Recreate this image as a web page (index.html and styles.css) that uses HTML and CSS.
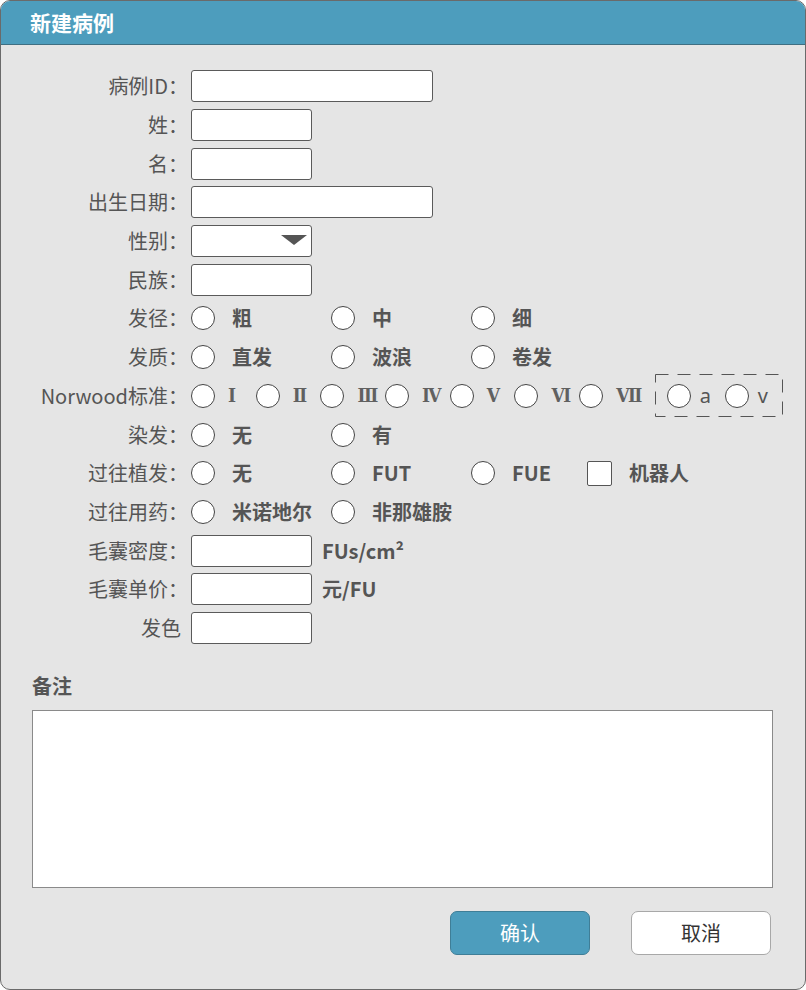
FILE: index.html
```html
<!DOCTYPE html>
<html lang="zh-CN">
<head>
<meta charset="utf-8">
<title>新建病例</title>
<link rel="stylesheet" href="styles.css">
</head>
<body>
<div class="dialog">
  <div class="header"><span class="title">新建病例</span></div>
  <div class="form">
    <div class="row"><span class="label">病例ID：</span><span class="input long"></span></div>
    <div class="row"><span class="label">姓：</span><span class="input"></span></div>
    <div class="row"><span class="label">名：</span><span class="input"></span></div>
    <div class="row"><span class="label">出生日期：</span><span class="input long"></span></div>
    <div class="row"><span class="label">性别：</span><span class="input select"><span class="arrow"></span></span></div>
    <div class="row"><span class="label">民族：</span><span class="input"></span></div>
    <div class="row"><span class="label">发径：</span>
      <span class="opt"><span class="radio"></span><span class="otext">粗</span></span>
      <span class="opt"><span class="radio"></span><span class="otext">中</span></span>
      <span class="opt"><span class="radio"></span><span class="otext">细</span></span>
    </div>
    <div class="row"><span class="label">发质：</span>
      <span class="opt"><span class="radio"></span><span class="otext">直发</span></span>
      <span class="opt"><span class="radio"></span><span class="otext">波浪</span></span>
      <span class="opt"><span class="radio"></span><span class="otext">卷发</span></span>
    </div>
    <div class="row"><span class="label">Norwood标准：</span>
      <span class="nw"><span class="radio"></span><span class="roman">Ⅰ</span></span>
      <span class="nw"><span class="radio"></span><span class="roman">Ⅱ</span></span>
      <span class="nw"><span class="radio"></span><span class="roman">Ⅲ</span></span>
      <span class="nw"><span class="radio"></span><span class="roman">Ⅳ</span></span>
      <span class="nw"><span class="radio"></span><span class="roman">Ⅴ</span></span>
      <span class="nw"><span class="radio"></span><span class="roman">Ⅵ</span></span>
      <span class="nw"><span class="radio"></span><span class="roman">Ⅶ</span></span>
      <span class="dashbox">
        <svg class="dashline" width="128" height="43" viewBox="0 0 128 43"><rect x="0.5" y="0.5" width="127" height="42" fill="none" stroke="#555" stroke-width="1" stroke-dasharray="13 9"/></svg>
        <span class="sub"><span class="radio"></span><span class="latin">a</span></span>
        <span class="sub"><span class="radio"></span><span class="latin">v</span></span>
      </span>
    </div>
    <div class="row"><span class="label">染发：</span>
      <span class="opt"><span class="radio"></span><span class="otext">无</span></span>
      <span class="opt"><span class="radio"></span><span class="otext">有</span></span>
    </div>
    <div class="row"><span class="label">过往植发：</span>
      <span class="opt"><span class="radio"></span><span class="otext">无</span></span>
      <span class="opt"><span class="radio"></span><span class="otext">FUT</span></span>
      <span class="opt short"><span class="radio"></span><span class="otext">FUE</span></span>
      <span class="opt"><span class="check"></span><span class="otext">机器人</span></span>
    </div>
    <div class="row"><span class="label">过往用药：</span>
      <span class="opt"><span class="radio"></span><span class="otext">米诺地尔</span></span>
      <span class="opt"><span class="radio"></span><span class="otext">非那雄胺</span></span>
    </div>
    <div class="row"><span class="label">毛囊密度：</span><span class="input"></span><span class="unit">FUs/cm²</span></div>
    <div class="row"><span class="label">毛囊单价：</span><span class="input"></span><span class="unit">元/FU</span></div>
    <div class="row"><span class="label nocolon">发色</span><span class="input"></span></div>
  </div>
  <div class="notes">
    <div class="notes-label">备注</div>
    <div class="textarea"></div>
  </div>
  <div class="buttons">
    <span class="btn primary">确认</span>
    <span class="btn secondary">取消</span>
  </div>
</div>
</body>
</html>
```
FILE: styles.css
```css
html, body {
  margin: 0;
  padding: 0;
  background: #ffffff;
}
body {
  font-family: "Noto Sans CJK SC", "Noto Sans", sans-serif;
  color: #555555;
}
.dialog {
  width: 806px;
  height: 990px;
  box-sizing: border-box;
  border: 1px solid #6a6a6a;
  border-radius: 10px;
  overflow: hidden;
  background: #e5e5e5;
}
.header {
  height: 43px;
  background: #4d9dbd;
  border-bottom: 1px solid #3f6f82;
  display: flex;
  align-items: center;
  padding-left: 29px;
}
.title {
  color: #ffffff;
  font-size: 21px;
  font-weight: bold;
  line-height: 1;
  margin-top: -1px;
}
.form {
  padding-top: 22px;
}
.row {
  display: flex;
  align-items: center;
  height: 38.7px;
}
.label {
  width: 187px;
  box-sizing: border-box;
  text-align: right;
  font-size: 20px;
  line-height: 1;
  margin-right: 3px;
  white-space: nowrap;
}
.label.nocolon {
  width: 180px;
  margin-right: 10px;
}
.input {
  width: 121px;
  height: 32px;
  box-sizing: border-box;
  background: #ffffff;
  border: 1px solid #5a5a5a;
  border-radius: 3px;
  display: flex;
  align-items: center;
  justify-content: flex-end;
}
.input.long {
  width: 242px;
}
.arrow {
  width: 0;
  height: 0;
  border-left: 13px solid transparent;
  border-right: 13px solid transparent;
  border-top: 10px solid #555555;
  margin-right: 4px;
  margin-top: -3px;
}
.opt {
  width: 140px;
  display: flex;
  align-items: center;
  flex-shrink: 0;
}
.opt.short {
  width: 116px;
}
.radio {
  width: 24px;
  height: 24px;
  box-sizing: border-box;
  border: 1px solid #444444;
  border-radius: 50%;
  background: #ffffff;
  flex-shrink: 0;
}
.check {
  width: 25px;
  height: 25px;
  box-sizing: border-box;
  border: 1px solid #555555;
  border-radius: 2px;
  background: #ffffff;
  flex-shrink: 0;
}
.otext {
  margin-left: 17px;
  font-size: 20px;
  font-weight: bold;
  line-height: 1;
  white-space: nowrap;
}
.nw {
  width: 64.7px;
  display: flex;
  align-items: center;
  flex-shrink: 0;
}
.roman {
  margin-left: 13px;
  font-family: "DejaVu Serif Condensed", "DejaVu Serif", "Liberation Serif", serif;
  font-weight: bold;
  font-size: 19px;
  line-height: 1;
  color: #606060;
}
.dashbox {
  position: relative;
  width: 128px;
  height: 43px;
  box-sizing: border-box;
  margin-left: 11px;
  padding-left: 12px;
  display: flex;
  align-items: center;
  flex-shrink: 0;
}
.dashline {
  position: absolute;
  left: 0;
  top: 0;
}
.sub {
  width: 58px;
  display: flex;
  align-items: center;
}
.latin {
  margin-left: 9px;
  font-family: "Noto Sans", sans-serif;
  font-size: 20px;
  line-height: 1;
  color: #555555;
}
.unit {
  margin-left: 10px;
  font-size: 20px;
  font-weight: bold;
  line-height: 1;
}
.notes {
  padding: 29px 32px 0 31px;
}
.notes-label {
  font-size: 20px;
  font-weight: bold;
  line-height: 1;
  height: 34px;
}
.textarea {
  width: 741px;
  height: 178px;
  box-sizing: border-box;
  background: #ffffff;
  border: 1px solid #8a8a8a;
}
.buttons {
  display: flex;
  justify-content: flex-end;
  gap: 41px;
  padding-top: 23px;
  padding-right: 34px;
}
.btn {
  width: 140px;
  height: 44px;
  box-sizing: border-box;
  border-radius: 7px;
  display: flex;
  align-items: center;
  justify-content: center;
  font-size: 20px;
  line-height: 1;
}
.btn.primary {
  background: #4d9dbd;
  border: 1px solid #3f7e97;
  color: #ffffff;
}
.btn.secondary {
  background: #ffffff;
  border: 1px solid #a8a8a8;
  color: #333333;
}
```
